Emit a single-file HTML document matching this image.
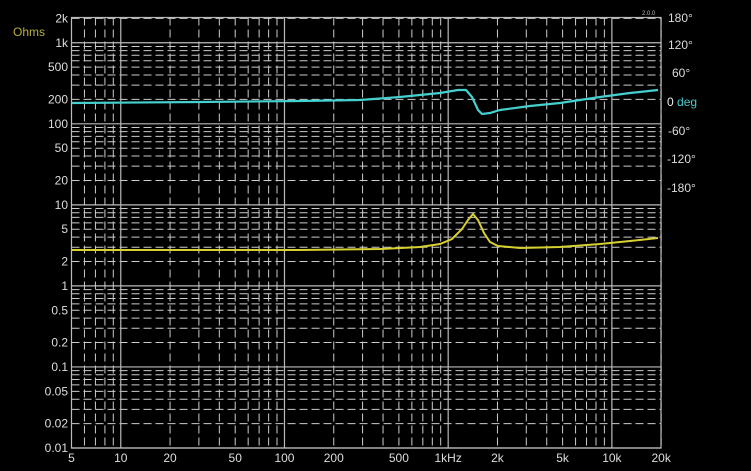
<!DOCTYPE html><html><head><style>
body{margin:0;background:#000;width:751px;height:471px;overflow:hidden;font-family:"Liberation Sans",sans-serif}
</style></head><body>
<svg id="s" width="751" height="471" xmlns="http://www.w3.org/2000/svg" style="position:absolute;left:0;top:0">
<rect width="751" height="471" fill="#000"/>
<g id="g"></g>
<text x="13" y="36" fill="#b8b040" font-size="12">Ohms</text>
<text x="642" y="15" fill="#bbb" font-size="6">2.0.0</text>
<text x="667" y="106" fill="#eee" font-size="12">0 <tspan fill="#4cc">deg</tspan></text>
<polyline fill="none" stroke="#45d0d0" stroke-width="2.2" points="72,103 200,102 300,101 360,100 400,97 440,93 458,90 466,90 472,97 478,110 482,114 490,113 500,110 530,106 560,103 600,97 630,93 658,90"/>
<polyline fill="none" stroke="#d8d030" stroke-width="2" points="72,250 300,250 380,249 420,247 440,244 452,239 462,229 468,220 473,214 478,220 484,233 490,242 498,246 520,248 560,247 600,244 630,241 658,238"/>
</svg>
<script>
var g=document.getElementById('g'),ns='http://www.w3.org/2000/svg',h='';
var L=71.5,R=661,T=17.5,B=448,dx=163.7,dy=81.05;
function X(f){return L+Math.log10(f/5)*dx}
function Y(v){return B-Math.log10(v/0.01)*dy}
// horizontal
for(var e=-2;e<=3;e++){for(var m=1;m<=9;m++){var v=m*Math.pow(10,e);if(v<0.01||v>2000)continue;var y=Y(v);
 if(m==1) h+='<line x1="'+L+'" x2="'+R+'" y1="'+y+'" y2="'+y+'" stroke="#bbb" stroke-width="1.2"/>';
 else h+='<line x1="'+L+'" x2="'+R+'" y1="'+y+'" y2="'+y+'" stroke="#ccc" stroke-width="1" stroke-dasharray="8,4"/>';}}
// vertical
for(var e=0;e<=4;e++){for(var m=1;m<=9;m++){var f=m*Math.pow(10,e);if(f<5||f>20000)continue;var x=X(f);
 if(m==1) h+='<line x1="'+x+'" x2="'+x+'" y1="'+T+'" y2="'+B+'" stroke="#bbb" stroke-width="1.2"/>';
 else h+='<line x1="'+x+'" x2="'+x+'" y1="'+T+'" y2="'+B+'" stroke="#ccc" stroke-width="1" stroke-dasharray="8,4"/>';}}
h+='<rect x="'+L+'" y="'+T+'" width="'+(R-L)+'" height="'+(B-T)+'" fill="none" stroke="#bbb" stroke-width="1.2"/>';
var yl=[[2000,'2k'],[1000,'1k'],[500,'500'],[200,'200'],[100,'100'],[50,'50'],[20,'20'],[10,'10'],[5,'5'],[2,'2'],[1,'1'],[0.5,'0.5'],[0.2,'0.2'],[0.1,'0.1'],[0.05,'0.05'],[0.02,'0.02'],[0.01,'0.01']];
yl.forEach(function(a){h+='<text x="68" y="'+(Y(a[0])+4)+'" fill="#ddd" font-size="12" text-anchor="end">'+a[1]+'</text>'});
var xl=[[5,'5'],[10,'10'],[20,'20'],[50,'50'],[100,'100'],[200,'200'],[500,'500'],[1000,'1kHz'],[2000,'2k'],[5000,'5k'],[10000,'10k'],[20000,'20k']];
xl.forEach(function(a){h+='<text x="'+X(a[0])+'" y="462" fill="#ddd" font-size="12" text-anchor="middle">'+a[1]+'</text>'});
var pl=[['180°',22],['120°',49],['60°',77],['-60°',135],['-120°',163],['-180°',192]];
pl.forEach(function(a){h+='<text x="'+(a[0].length>4?667:(a[0].length>3?668:672))+'" y="'+a[1]+'" fill="#ddd" font-size="12">'+a[0]+'</text>'});
g.innerHTML=h;
</script>
</body></html>
